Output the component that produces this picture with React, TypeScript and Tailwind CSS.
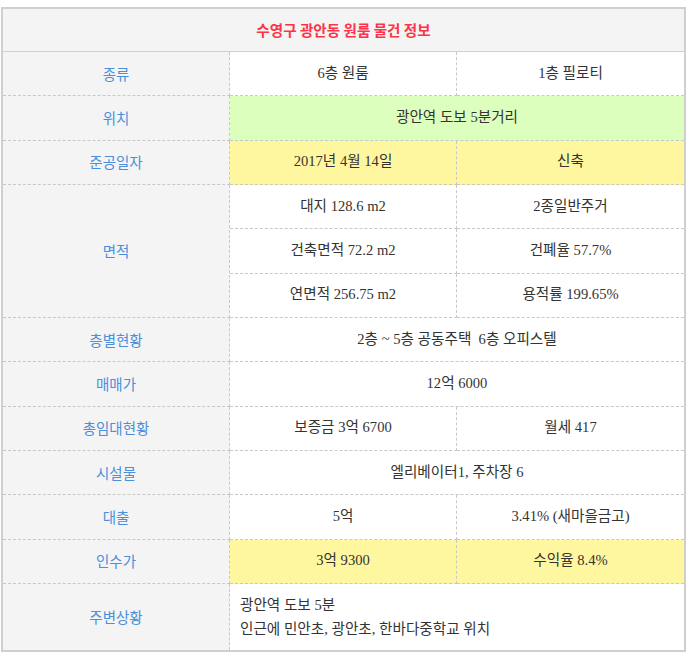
import React from "react";

const sans = "font-['Noto_Sans_CJK_KR','Noto_Sans',sans-serif]";
const serif = "font-['Liberation_Serif','Noto_Sans_CJK_KR',serif]";

const lab =
  "flex items-center justify-center bg-[#f4f4f4] border-r border-b border-dashed border-[#c8c8c8] text-[14.5px] text-[#4a8fdb] " +
  sans;
const cell =
  "flex items-center justify-center border-b border-dashed border-[#c8c8c8] text-[14.6px] text-[#333] " + serif;

export default function App() {
  return (
    <div className="bg-white w-[689px] h-[660px] pt-[7px] pl-[1px]">
      <div className="w-[685px] border-2 border-[#cfcfcf] bg-white">
        <div
          className={
            "h-[43px] flex items-center justify-center bg-[#f4f4f4] border-b border-[#cfcfcf] text-[14.6px] font-bold text-[#ff3348] " +
            sans
          }
        >
          수영구 광안동 원룸 물건 정보
        </div>
        <div className="grid grid-cols-[227px_227px_227px] grid-rows-[repeat(12,44.33px)_66px]">
          <div className={lab}>종류</div>
          <div className={cell + " border-r"}>6층 원룸</div>
          <div className={cell}>1층 필로티</div>

          <div className={lab}>위치</div>
          <div className={cell + " col-span-2 bg-[#dcffbe]"}>광안역 도보 5분거리</div>

          <div className={lab}>준공일자</div>
          <div className={cell + " border-r bg-[#fff79f]"}>2017년 4월 14일</div>
          <div className={cell + " bg-[#fff79f]"}>신축</div>

          <div className={lab + " row-span-3"}>면적</div>
          <div className={cell + " border-r"}>대지 128.6 m2</div>
          <div className={cell}>2종일반주거</div>
          <div className={cell + " border-r"}>건축면적 72.2 m2</div>
          <div className={cell}>건폐율 57.7%</div>
          <div className={cell + " border-r"}>연면적 256.75 m2</div>
          <div className={cell}>용적률 199.65%</div>

          <div className={lab}>층별현황</div>
          <div className={cell + " col-span-2 whitespace-pre"}>2층 ~ 5층 공동주택  6층 오피스텔</div>

          <div className={lab}>매매가</div>
          <div className={cell + " col-span-2"}>12억 6000</div>

          <div className={lab}>총임대현황</div>
          <div className={cell + " border-r"}>보증금 3억 6700</div>
          <div className={cell}>월세 417</div>

          <div className={lab}>시설물</div>
          <div className={cell + " col-span-2"}>엘리베이터1, 주차장 6</div>

          <div className={lab}>대출</div>
          <div className={cell + " border-r"}>5억</div>
          <div className={cell}>3.41% (새마을금고)</div>

          <div className={lab}>인수가</div>
          <div className={cell + " border-r bg-[#fff79f]"}>3억 9300</div>
          <div className={cell + " bg-[#fff79f]"}>수익율 8.4%</div>

          <div className={lab + " border-b-0"}>주변상황</div>
          <div
            className={
              "col-span-2 flex flex-col justify-center pl-[10px] text-[14.6px] leading-[24px] text-[#333] " + serif
            }
          >
            <div>광안역 도보 5분</div>
            <div>인근에 민안초, 광안초, 한바다중학교 위치</div>
          </div>
        </div>
      </div>
    </div>
  );
}
